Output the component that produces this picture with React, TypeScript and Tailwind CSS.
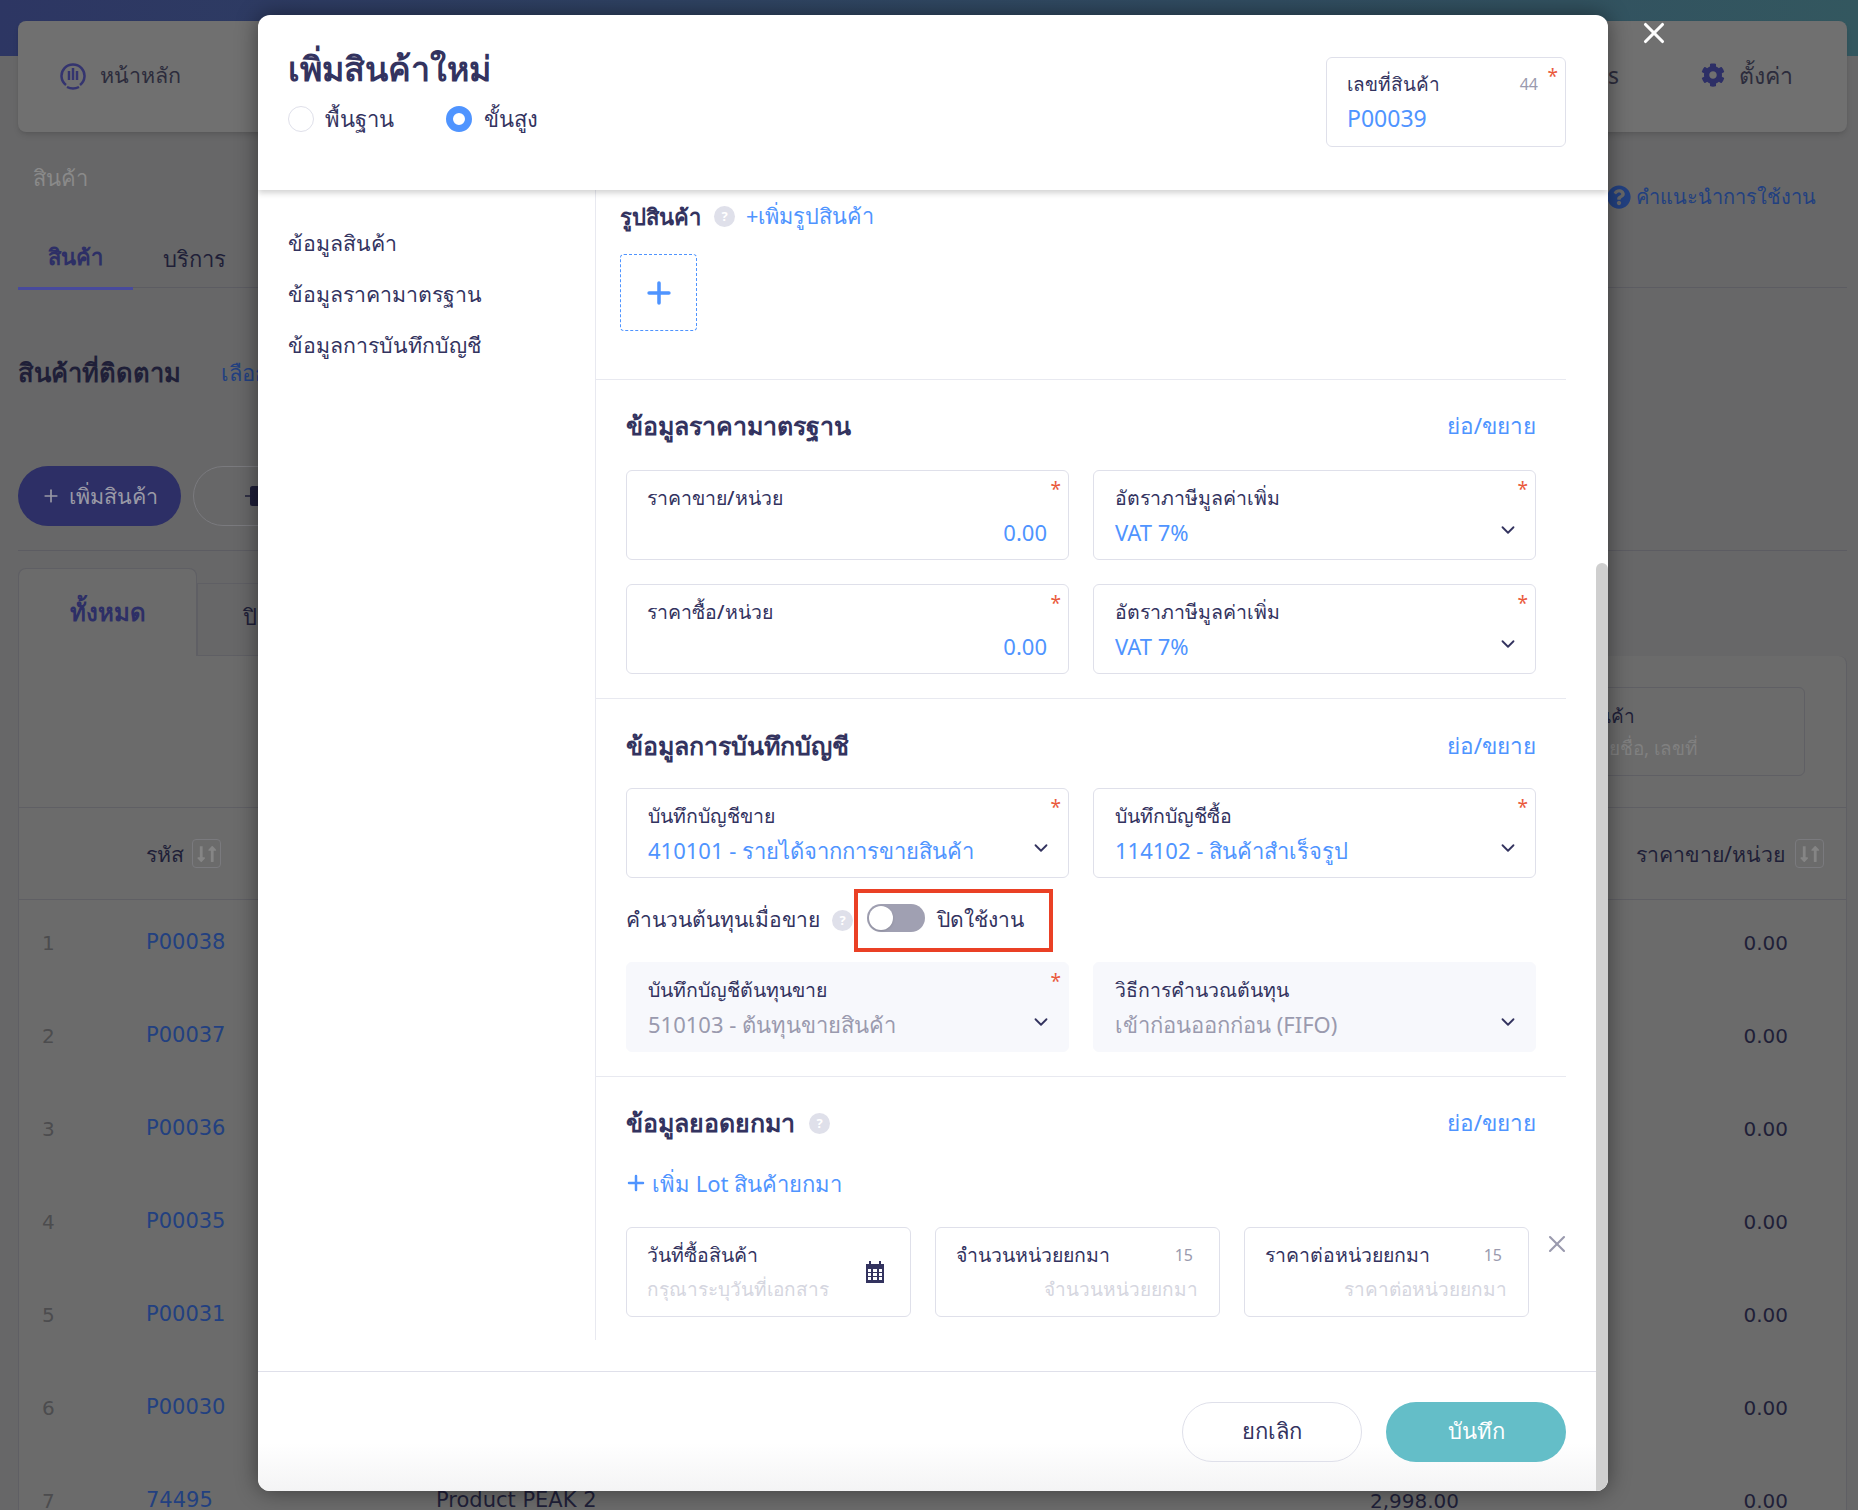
import { ChevronDown, Plus, X } from 'lucide-react';
import { FaCog, FaLongArrowAltDown, FaLongArrowAltUp, FaQuestionCircle } from 'react-icons/fa';

const filas = [
  { n: 1, codigo: 'P00038' },
  { n: 2, codigo: 'P00037' },
  { n: 3, codigo: 'P00036' },
  { n: 4, codigo: 'P00035' },
  { n: 5, codigo: 'P00031' },
  { n: 6, codigo: 'P00030' },
  { n: 7, codigo: '74495', nombre: 'Product PEAK 2', precio: '2,998.00' },
];

function SortIcon() {
  return (
    <span className="flex h-[29px] w-[29px] items-center justify-center rounded border border-[#7a7a7e] text-[#858585]">
      <FaLongArrowAltDown size={18} className="-mr-1.5" />
      <FaLongArrowAltUp size={18} />
    </span>
  );
}

function Help() {
  return (
    <span className="flex h-[21px] w-[21px] shrink-0 items-center justify-center rounded-full bg-[#dfe0ea] text-[13px] font-bold leading-none text-white">
      ?
    </span>
  );
}

function Star() {
  return <span className="absolute right-[7px] top-[6px] text-[19px] leading-[24px] text-[#ea5a3c]">*</span>;
}

function Field({
  label,
  value,
  required,
  select,
  right,
  disabled,
  counter,
  placeholder,
  indent,
}: {
  label: string;
  value?: string;
  required?: boolean;
  select?: boolean;
  right?: boolean;
  disabled?: boolean;
  counter?: string;
  placeholder?: boolean;
  indent?: boolean;
}) {
  const tono = placeholder
    ? 'text-[19px] text-[#d5d6e0]'
    : disabled
      ? 'text-[22px] text-[#9a9aae]'
      : 'text-[22px] text-[#4f94ff]';
  return (
    <div
      className={`relative h-[90px] rounded-md border ${
        disabled ? 'border-[#f7f8fc] bg-[#f7f8fc]' : 'border-[#dfe0ea] bg-white'
      } ${indent ? 'pl-[21px]' : 'pl-[20px]'} pr-[21px] pt-[13px]`}
    >
      {required && <Star />}
      <div className="flex h-[28px] items-center justify-between text-[19.5px] font-medium text-[#33335f]">
        <span>{label}</span>
        {counter && <span className="mr-[5px] text-[16px] font-normal text-[#9a9aae]">{counter}</span>}
      </div>
      <div className={`mt-[6px] h-[28px] leading-[28px] ${right ? 'text-right' : ''} ${tono}`}>{value}</div>
      {select && <ChevronDown size={22} strokeWidth={2} className="absolute right-[16px] top-[48px] text-[#33335f]" />}
    </div>
  );
}

function SectionTitle({ title, help }: { title: string; help?: boolean }) {
  return (
    <div className="flex h-[34px] items-center justify-between">
      <div className="flex items-center gap-[14px]">
        <h3 className="text-[25px] font-semibold text-[#33335f]">{title}</h3>
        {help && <Help />}
      </div>
      <span className="text-[22.5px] text-[#4f94ff]">ย่อ/ขยาย</span>
    </div>
  );
}

function PaginaFondo() {
  return (
    <div className="h-[1510px] bg-[#676768] text-[#1f1f38]">
      <div className="h-14 bg-gradient-to-r from-[#2d3663] to-[#33575f]" />
      <div className="pl-[18px] pr-[11px]">
        <div className="-mt-[35px] flex h-[111px] items-center justify-between rounded-lg bg-[#707070] pl-[42px] pr-[54px] shadow-md">
          <div className="-mt-[3px] flex items-center gap-[14px] text-[21.5px] text-[#2c2c3c]">
            <svg width="26" height="30" viewBox="0 0 26 30" fill="none" stroke="#34346f" strokeWidth="2.5">
              <path d="M6 25a11.5 11.5 0 1 1 14 0" />
              <path d="M7 27c4 2 8 2 12 0M9 11v9M13 8v12M17 11v9" />
            </svg>
            <span>หน้าหลัก</span>
          </div>
          <div className="-mt-[3px] flex items-center gap-[82px] text-[23px] text-[#2c2c3c]">
            <span>s</span>
            <div className="flex items-center gap-[14px]">
              <FaCog size={24} className="text-[#2d2f66]" />
              <span>ตั้งค่า</span>
            </div>
          </div>
        </div>
        <div className="flex h-[156px] flex-col border-b border-[#5c5c62]">
          <div className="flex items-start justify-between">
            <span className="mt-[29px] pl-[15px] text-[22px] text-[#8a8a8a]">สินค้า</span>
            <div className="mt-[50px] flex items-center gap-[5px] pr-[31px] text-[20px] text-[#224080]">
              <FaQuestionCircle size={24} />
              <span>คำแนะนำการใช้งาน</span>
            </div>
          </div>
          <div className="-mb-[3px] mt-auto flex text-[22px] text-[#1f1f38]">
            <span className="flex h-[54px] w-[115px] items-center justify-center border-b-[3px] border-[#484a9c] pb-[10px] font-semibold text-[#2d2f66]">
              สินค้า
            </span>
            <span className="ml-[8px] flex h-[54px] items-center px-[22px] pb-[10px]">บริการ</span>
          </div>
        </div>
        <div className="mt-[62px] flex h-[44px] items-center gap-[40px]">
          <h2 className="text-[25.5px] font-semibold">สินค้าที่ติดตาม</h2>
          <span className="text-[22px] text-[#224080]">เลือก</span>
        </div>
        <div className="mt-[72px] flex gap-3">
          <div className="flex h-[60px] w-[163px] items-center justify-center gap-2 rounded-full bg-[#2d2f66] text-[21.5px] text-[#9a9aa6]">
            <Plus size={20} />
            เพิ่มสินค้า
          </div>
          <div className="flex h-[60px] w-[200px] items-center rounded-full border border-[#7a7a7e] pl-[51px]">
            <svg width="20" height="22" viewBox="0 0 20 22">
              <rect x="5" y="1" width="15" height="20" rx="2.5" fill="#1f1f38" />
              <path d="M0 11h11M8 7l4 4-4 4" fill="none" stroke="#1f1f38" strokeWidth="1.6" />
            </svg>
          </div>
        </div>
        <div className="mt-6 border-t border-[#5c5c62]" />
        <div className="mt-[17px] flex items-end">
          <div className="flex h-[88px] w-[179px] justify-center rounded-t-lg border border-b-0 border-[#5f5f64] bg-[#6b6b6b] pt-[25px] text-[24px] font-semibold text-[#2d2f66]">
            ทั้งหมด
          </div>
          <div className="h-[73px] w-[300px] border border-[#5f5f64] pl-[45px] pt-[16px] text-[22px]">ปิดใช้งาน</div>
        </div>
        <div className="rounded-tr-lg border border-t-0 border-[#5f5f64] bg-[#6b6b6b]">
          <div className="flex h-[151px] justify-end pr-[41px] pt-[31px]">
            <div className="h-[89px] w-[500px] rounded-md border border-[#5f5f64] pl-[230px] pt-[13px] text-[#1f1f38]">
              <div className="text-[19px] font-medium leading-[30px]">ค้นหาสินค้า</div>
              <div className="mt-[2px] text-[19px] leading-[30px] text-[#808080]">ค้นหาด้วยชื่อ, เลขที่</div>
            </div>
          </div>
          <div className="flex h-[93px] items-center justify-between border-y border-[#5f5f64] pl-[127px] pr-[22px] text-[21.3px]">
            <div className="flex items-center gap-2">
              <span>รหัส</span>
              <SortIcon />
            </div>
            <div className="flex items-center gap-[10px]">
              <span>ราคาขาย/หน่วย</span>
              <SortIcon />
            </div>
          </div>
          {filas.map((fila) => (
            <div key={fila.n} className="flex h-[93px] items-center pb-[7px] font-['DejaVu_Sans',sans-serif] text-[20px]">
              <span className="w-[127px] pl-[23px] text-[#4c4c4e]">{fila.n}</span>
              <span className="w-[290px] text-[21px] text-[#224080]">{fila.codigo}</span>
              <span className="w-[500px] text-[21px]">{fila.nombre}</span>
              <span className="w-[523px] text-right">{fila.precio}</span>
              <span className="w-[329px] text-right">0.00</span>
            </div>
          ))}
        </div>
      </div>
    </div>
  );
}

export default function App() {
  return (
    <div className="relative h-[1510px] overflow-hidden font-['Noto_Sans','Inter',sans-serif]">
      <PaginaFondo />

      <X size={34} strokeWidth={2.2} className="absolute left-[1637px] top-[16px] text-white" />

      <div className="absolute left-[258px] top-[15px] flex h-[1476px] w-[1350px] flex-col overflow-hidden rounded-xl bg-white shadow-[0_0_22px_rgba(0,0,0,0.45)]">
        <div className="z-10 flex h-[175px] shrink-0 justify-between pl-[30px] pr-[42px] shadow-[0_3px_6px_rgba(0,0,0,0.18)]">
          <div>
            <h1 className="mt-[29px] text-[34px] font-semibold leading-[48px] text-[#33335f]">เพิ่มสินค้าใหม่</h1>
            <div className="mt-[10px] flex items-center text-[22px] text-[#33335f]">
              <span className="h-[26px] w-[26px] rounded-full border border-[#dfe0ea]" />
              <span className="ml-[11px]">พื้นฐาน</span>
              <span className="ml-[52px] h-[26px] w-[26px] rounded-full border-[7px] border-[#4f94ff]" />
              <span className="ml-[12px]">ขั้นสูง</span>
            </div>
          </div>
          <div className="relative mt-[42px] h-[90px] w-[240px] rounded-md border border-[#dfe0ea] pl-[20px] pr-[27px] pt-[12px]">
            <Star />
            <div className="flex h-[28px] items-center justify-between text-[19px] font-medium text-[#33335f]">
              <span>เลขที่สินค้า</span>
              <span className="text-[16px] font-normal text-[#9a9aae]">44</span>
            </div>
            <div className="mt-[6px] text-[23px] leading-[28px] text-[#4f94ff]">P00039</div>
          </div>
        </div>

        <div className="flex min-h-0 flex-1">
          <div className="w-[337px] shrink-0 pl-[30px] pt-[32px] text-[21.3px] text-[#33335f]">
            <div className="h-[51px] leading-[42px]">ข้อมูลสินค้า</div>
            <div className="h-[51px] leading-[42px]">ข้อมูลราคามาตรฐาน</div>
            <div className="h-[51px] leading-[42px]">ข้อมูลการบันทึกบัญชี</div>
          </div>
          <div className="h-[1150px] w-[971px] border-l border-[#e8e9f0]">
            <div className="h-[190px] border-b border-[#e8e9f0] px-[24px] pt-[9px]">
              <div className="flex h-[34px] items-center">
                <span className="text-[22px] font-semibold text-[#33335f]">รูปสินค้า</span>
                <span className="ml-[13px]">
                  <Help />
                </span>
                <span className="ml-[11px] text-[21.7px] text-[#4f94ff]">+เพิ่มรูปสินค้า</span>
              </div>
              <div className="mt-[21px] flex h-[77px] w-[77px] items-center justify-center rounded border border-dashed border-[#4f94ff]">
                <Plus size={34} strokeWidth={2.5} className="text-[#4f94ff]" />
              </div>
            </div>

            <div className="border-b border-[#e8e9f0] px-[30px] pb-[24px] pt-[29px]">
              <SectionTitle title="ข้อมูลราคามาตรฐาน" />
              <div className="mt-[27px] grid grid-cols-2 gap-x-[24px] gap-y-[24px]">
                <Field label="ราคาขาย/หน่วย" value="0.00" required right />
                <Field label="อัตราภาษีมูลค่าเพิ่ม" value="VAT 7%" required select indent />
                <Field label="ราคาซื้อ/หน่วย" value="0.00" required right />
                <Field label="อัตราภาษีมูลค่าเพิ่ม" value="VAT 7%" required select indent />
              </div>
            </div>

            <div className="border-b border-[#e8e9f0] px-[30px] pb-[24px] pt-[30px]">
              <SectionTitle title="ข้อมูลการบันทึกบัญชี" />
              <div className="mt-[25px] grid grid-cols-2 gap-x-[24px]">
                <Field label="บันทึกบัญชีขาย" value="410101 - รายได้จากการขายสินค้า" required select indent />
                <Field label="บันทึกบัญชีซื้อ" value="114102 - สินค้าสำเร็จรูป" required select indent />
              </div>
              <div className="relative flex h-[84px] items-center text-[21px] text-[#33335f]">
                <span>คำนวนต้นทุนเมื่อขาย</span>
                <span className="ml-3">
                  <Help />
                </span>
                <div className="absolute left-[228px] top-[11px] h-[63px] w-[199px] border-4 border-[#ea4025]" />
                <span className="relative -mt-[4px] ml-[14px] h-[28px] w-[58px] rounded-full bg-[#a0a0b2]">
                  <span className="absolute left-[2px] top-[2px] h-[24px] w-[24px] rounded-full bg-white shadow" />
                </span>
                <span className="ml-[12px]">ปิดใช้งาน</span>
              </div>
              <div className="grid grid-cols-2 gap-x-[24px]">
                <Field label="บันทึกบัญชีต้นทุนขาย" value="510103 - ต้นทุนขายสินค้า" required select disabled indent />
                <Field label="วิธีการคำนวณต้นทุน" value="เข้าก่อนออกก่อน (FIFO)" select disabled indent />
              </div>
            </div>

            <div className="px-[30px] pt-[29px]">
              <SectionTitle title="ข้อมูลยอดยกมา" help />
              <div className="mt-[26px] -ml-[2px] flex h-[34px] items-center gap-1 text-[22px] text-[#4f94ff]">
                <Plus size={24} strokeWidth={2.5} />
                <span>เพิ่ม Lot สินค้ายกมา</span>
              </div>
              <div className="mt-[27px] flex gap-[24px]">
                <div className="relative w-[285px] shrink-0">
                  <Field label="วันที่ซื้อสินค้า" value="กรุณาระบุวันที่เอกสาร" placeholder />
                  <svg width="18" height="22" viewBox="0 0 18 22" className="absolute right-[27px] top-[34px]" fill="#33335f">
                    <path d="M3 0h2v3H3zM13 0h2v3h-2z" />
                    <path d="M0 3h18v19H0zM2 8v3h3V8zm5 0v3h4V8zm6 0v3h3V8zM2 12v3h3v-3zm5 0v3h4v-3zm6 0v3h3v-3zM2 16v3h3v-3zm5 0v3h4v-3zm6 0v3h3v-3z" fillRule="evenodd" />
                  </svg>
                </div>
                <div className="w-[285px] shrink-0">
                  <Field label="จำนวนหน่วยยกมา" value="จำนวนหน่วยยกมา" counter="15" placeholder right />
                </div>
                <div className="w-[285px] shrink-0">
                  <Field label="ราคาต่อหน่วยยกมา" value="ราคาต่อหน่วยยกมา" counter="15" placeholder right />
                </div>
                <X size={28} strokeWidth={1.8} className="-ml-[10px] mt-[3px] shrink-0 text-[#9a9aae]" />
              </div>
            </div>
          </div>
        </div>

        <div className="flex h-[120px] shrink-0 justify-end gap-[24px] border-t border-[#dfe0ea] bg-gradient-to-b from-white from-60% to-[#f4f4f5] pr-[42px] pt-[30px] text-[22px]">
          <button className="h-[60px] w-[180px] rounded-full border border-[#dfe0ea] pb-[4px] text-[#33335f]">ยกเลิก</button>
          <button className="h-[60px] w-[180px] rounded-full bg-[#64bec8] pb-[4px] text-white">บันทึก</button>
        </div>

        <div className="absolute bottom-0 right-0 top-[548px] w-3 rounded-t-md bg-[#cfcfcf]" />
      </div>
    </div>
  );
}
